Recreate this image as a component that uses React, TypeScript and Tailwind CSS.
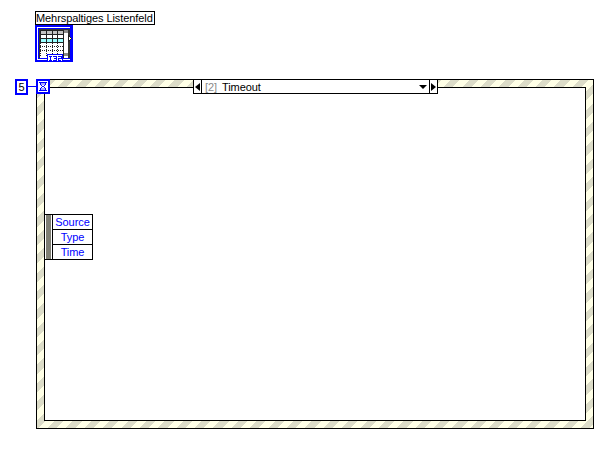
const font = "font-['Liberation_Sans',Arial,sans-serif]";

function ListboxIcon() {
  return (
    <svg width="38" height="37" viewBox="0 0 38 37" shapeRendering="crispEdges" className="block">
      <rect x="1" y="1" width="36" height="35" fill="#fff" stroke="#0000ff" strokeWidth="2" />
      <rect x="3.5" y="3.5" width="31" height="30" fill="#fff" stroke="#0000ff" />
      <rect x="4" y="4" width="32" height="29" fill="#333" />
      <rect x="5" y="5" width="23" height="28" fill="#fff" />
      <rect x="5" y="6" width="23" height="3" fill="#c4c4c4" />
      <rect x="5" y="14" width="23" height="3" fill="#99ffff" />
      <path d="M5 5.5h23M5 9.5h23M5 13.5h23M5 17.5h23M11.5 5v13M17.5 5v13M22.5 5v13M5.5 5v13" stroke="#222" />
      <path d="M11.5 18v14M17.5 18v14M22.5 18v14M5.5 18v14M5 21.5h23M5 25.5h23" stroke="#222" strokeDasharray="1 1" />
      <rect x="28" y="5" width="5" height="28" fill="#fff" />
      <rect x="28" y="5" width="5" height="3" fill="#8a8a8a" />
      <rect x="28" y="28" width="5" height="3" fill="#8a8a8a" />
      <path d="M28.5 5v28" stroke="#222" />
      <rect x="35" y="1" width="2" height="35" fill="#0000ff" />
      <path d="M33.5 10.5l3 3-3 3z" fill="#fff" stroke="#222" />
      <rect x="12.5" y="29.5" width="15" height="7" fill="#fff" stroke="#0000ff" />
      <path d="M14 31.5h3M15.5 32v3M14 35.5h3M18 31.5h3v4h-3M19 33.5h2M23 31.5h3v2h-3v2h3" fill="none" stroke="#0000ff" />
    </svg>
  );
}

function Hourglass() {
  return (
    <svg width="14" height="15" viewBox="0 0 14 15" shapeRendering="crispEdges" className="block">
      <rect x="1" y="1" width="12" height="13" fill="#fff" stroke="#0000ff" strokeWidth="2" />
      <path d="M3 3.5h8M3 11.5h8M4.5 4v1.5l2 2v0l-2 2V11M9.5 4v1.5l-2 2v0l2 2V11" fill="none" stroke="#0000ff" />
      <rect x="5" y="4" width="4" height="2" fill="#a8a8ff" />
      <rect x="5" y="9" width="4" height="2" fill="#a8a8ff" />
    </svg>
  );
}

export default function App() {
  return (
    <div className={`relative w-[607px] h-[451px] bg-white overflow-hidden text-black text-[11px] leading-none tracking-[-0.08px] ${font}`}>
      {/* control label + terminal */}
      <div className="absolute left-[35px] top-[11px] w-[120px] h-[14px] border border-black flex items-center whitespace-nowrap">
        Mehrspaltiges Listenfeld
      </div>
      <div className="absolute left-[35px] top-[25px]">
        <ListboxIcon />
      </div>

      {/* timeout constant + wire */}
      <div className="absolute left-[15px] top-[79px] w-[13px] h-[16px] border-2 border-[#0000ff] flex items-center justify-center">
        5
      </div>
      <div className="absolute left-[28px] top-[86px] w-[9px] h-px bg-[#0000ff]" />

      {/* event structure frame */}
      <div className="absolute left-[36px] top-[79px] w-[558px] h-[350px] border border-black p-[7px] bg-[repeating-linear-gradient(135deg,#ffffe6_0px,#ffffe6_6.5px,#dcdcc8_6.5px,#dcdcc8_13px)]">
        <div className="w-full h-full border border-black bg-white" />
      </div>
      <div className="absolute left-[36px] top-[79px]">
        <Hourglass />
      </div>

      {/* case selector */}
      <div className="absolute left-[193px] top-[79px] w-[245px] h-[15px] border border-black bg-white flex items-stretch">
        <div className="w-[8px] border-r border-black flex items-center justify-center">
          <div className="w-0 h-0 border-y-[4px] border-y-transparent border-r-[5px] border-r-black" />
        </div>
        <div className="flex-1 flex items-center pl-[3px] pt-px whitespace-nowrap">
          <span className="text-[#8a8a8a] mr-[5px]">[2]</span>
          <span>Timeout</span>
          <div className="ml-auto mr-[2px] w-0 h-0 border-x-[4px] border-x-transparent border-t-[4px] border-t-black" />
        </div>
        <div className="w-[8px] border-l border-black flex items-center justify-center">
          <div className="w-0 h-0 border-y-[4px] border-y-transparent border-l-[5px] border-l-black" />
        </div>
      </div>

      {/* event data node */}
      <div className="absolute left-[44px] top-[214px] flex">
        <div className="w-[9px] h-[46px] border border-black bg-white flex">
          <div className="w-[5px] h-full ml-px bg-[#7f7f74]" />
        </div>
        <div className="w-[40px] h-[46px] border border-l-0 border-black flex flex-col text-[#0000ff] bg-white">
          {["Source", "Type", "Time"].map((name, i) => (
            <div key={name} className={`flex-1 flex items-center justify-center ${i > 0 ? "border-t border-black" : ""}`}>
              {name}
            </div>
          ))}
        </div>
      </div>
    </div>
  );
}
